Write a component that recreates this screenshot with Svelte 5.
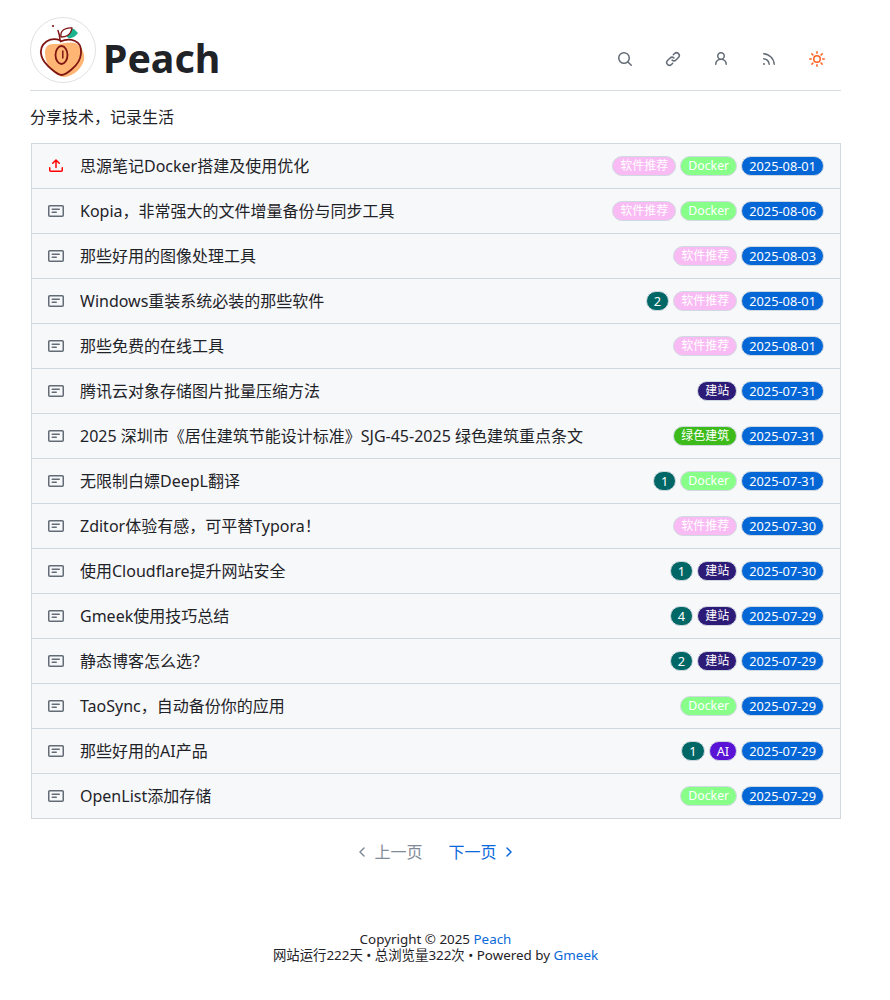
<script>
	const paths = {
		search: 'M10.68 11.74a6 6 0 0 1-7.922-8.982 6 6 0 0 1 8.982 7.922l3.04 3.04a.749.749 0 0 1-.326 1.275.749.749 0 0 1-.734-.215ZM11.5 7a4.499 4.499 0 1 0-8.997 0A4.499 4.499 0 0 0 11.5 7Z',
		link: 'm7.775 3.275 1.25-1.25a3.5 3.5 0 1 1 4.95 4.95l-2.5 2.5a3.5 3.5 0 0 1-4.95 0 .751.751 0 0 1 .018-1.042.751.751 0 0 1 1.042-.018 1.998 1.998 0 0 0 2.83 0l2.5-2.5a2.002 2.002 0 0 0-2.83-2.83l-1.25 1.25a.751.751 0 0 1-1.042-.018.751.751 0 0 1-.018-1.042Zm-4.69 9.64a1.998 1.998 0 0 0 2.83 0l1.25-1.25a.751.751 0 0 1 1.042.018.751.751 0 0 1 .018 1.042l-1.25 1.25a3.5 3.5 0 1 1-4.95-4.95l2.5-2.5a3.5 3.5 0 0 1 4.95 0 .751.751 0 0 1-.018 1.042.751.751 0 0 1-1.042.018 1.998 1.998 0 0 0-2.83 0l-2.5 2.5a1.998 1.998 0 0 0 0 2.83Z',
		person: 'M10.561 8.073a6.005 6.005 0 0 1 3.432 5.142.75.75 0 1 1-1.498.07 4.5 4.5 0 0 0-8.99 0 .75.75 0 0 1-1.498-.07 6.004 6.004 0 0 1 3.431-5.142 3.999 3.999 0 1 1 5.123 0ZM10.5 5a2.5 2.5 0 1 0-5 0 2.5 2.5 0 0 0 5 0Z',
		rss: 'M2.002 2.725a.75.75 0 0 1 .797-.699C8.79 2.42 13.58 7.21 13.974 13.201a.75.75 0 0 1-1.497.098 10.502 10.502 0 0 0-9.776-9.776.747.747 0 0 1-.7-.798ZM2.84 7.05h-.002a7.002 7.002 0 0 1 6.113 6.111.75.75 0 0 1-1.49.178 5.503 5.503 0 0 0-4.8-4.8.75.75 0 0 1 .179-1.489ZM2 13a1 1 0 1 1 2 0 1 1 0 0 1-2 0Z',
		sun: 'M8 12a4 4 0 1 1 0-8 4 4 0 0 1 0 8Zm0-1.5a2.5 2.5 0 1 0 0-5 2.5 2.5 0 0 0 0 5Zm5.657-8.157a.75.75 0 0 1 0 1.061l-1.061 1.06a.749.749 0 0 1-1.275-.326.749.749 0 0 1 .215-.734l1.06-1.06a.75.75 0 0 1 1.06 0Zm-9.193 9.193a.75.75 0 0 1 0 1.06l-1.06 1.061a.75.75 0 1 1-1.061-1.06l1.06-1.061a.75.75 0 0 1 1.061 0ZM8 0a.75.75 0 0 1 .75.75v1.5a.75.75 0 0 1-1.5 0V.75A.75.75 0 0 1 8 0ZM3 8a.75.75 0 0 1-.75.75H.75a.75.75 0 0 1 0-1.5h1.5A.75.75 0 0 1 3 8Zm13 0a.75.75 0 0 1-.75.75h-1.5a.75.75 0 0 1 0-1.5h1.5A.75.75 0 0 1 16 8Zm-8 5a.75.75 0 0 1 .75.75v1.5a.75.75 0 0 1-1.5 0v-1.5A.75.75 0 0 1 8 13Zm3.536-1.464a.75.75 0 0 1 1.06 0l1.061 1.06a.75.75 0 0 1-1.06 1.061l-1.061-1.06a.75.75 0 0 1 0-1.061ZM2.343 2.343a.75.75 0 0 1 1.061 0l1.06 1.061a.751.751 0 0 1-.018 1.042.751.751 0 0 1-1.042.018l-1.06-1.06a.75.75 0 0 1 0-1.06Z',
		upload: 'M2.75 14A1.75 1.75 0 0 1 1 12.25v-2.5a.75.75 0 0 1 1.5 0v2.5c0 .138.112.25.25.25h10.5a.25.25 0 0 0 .25-.25v-2.5a.75.75 0 0 1 1.5 0v2.5A1.75 1.75 0 0 1 13.25 14ZM11.78 4.72a.749.749 0 1 1-1.06 1.06L8.75 3.811V9.5a.75.75 0 0 1-1.5 0V3.811L5.28 5.78a.749.749 0 1 1-1.06-1.06l3.25-3.25a.749.749 0 0 1 1.06 0l3.25 3.25Z',
		note: 'M0 3.75C0 2.784.784 2 1.75 2h12.5c.966 0 1.75.784 1.75 1.75v8.5A1.75 1.75 0 0 1 14.25 14H1.75A1.75 1.75 0 0 1 0 12.25Zm1.75-.25a.25.25 0 0 0-.25.25v8.5c0 .138.112.25.25.25h12.5a.25.25 0 0 0 .25-.25v-8.5a.25.25 0 0 0-.25-.25ZM3.5 6.25a.75.75 0 0 1 .75-.75h7a.75.75 0 0 1 0 1.5h-7a.75.75 0 0 1-.75-.75Zm.75 2.25h4a.75.75 0 0 1 0 1.5h-4a.75.75 0 0 1 0-1.5Z'
	};

	const navIcons = ['search', 'link', 'person', 'rss', 'sun'];

	const SOFT = '软件推荐';
	const SITE = '建站';
	const DOCKER = 'Docker';
	const tagColors = {
		[SOFT]: 'tag-pink cjk',
		[SITE]: 'tag-navy cjk',
		[DOCKER]: 'tag-lime',
		绿色建筑: 'tag-green cjk',
		AI: 'tag-purple'
	};

	const posts = [
		{ title: '思源笔记Docker搭建及使用优化', tags: [SOFT, DOCKER], date: '2025-08-01', pinned: true },
		{ title: 'Kopia，非常强大的文件增量备份与同步工具', tags: [SOFT, DOCKER], date: '2025-08-06' },
		{ title: '那些好用的图像处理工具', tags: [SOFT], date: '2025-08-03' },
		{ title: 'Windows重装系统必装的那些软件', count: 2, tags: [SOFT], date: '2025-08-01' },
		{ title: '那些免费的在线工具', tags: [SOFT], date: '2025-08-01' },
		{ title: '腾讯云对象存储图片批量压缩方法', tags: [SITE], date: '2025-07-31' },
		{ title: '2025 深圳市《居住建筑节能设计标准》SJG-45-2025 绿色建筑重点条文', tags: ['绿色建筑'], date: '2025-07-31' },
		{ title: '无限制白嫖DeepL翻译', count: 1, tags: [DOCKER], date: '2025-07-31' },
		{ title: 'Zditor体验有感，可平替Typora！', tags: [SOFT], date: '2025-07-30' },
		{ title: '使用Cloudflare提升网站安全', count: 1, tags: [SITE], date: '2025-07-30' },
		{ title: 'Gmeek使用技巧总结', count: 4, tags: [SITE], date: '2025-07-29' },
		{ title: '静态博客怎么选？', count: 2, tags: [SITE], date: '2025-07-29' },
		{ title: 'TaoSync，自动备份你的应用', tags: [DOCKER], date: '2025-07-29' },
		{ title: '那些好用的AI产品', count: 1, tags: ['AI'], date: '2025-07-29' },
		{ title: 'OpenList添加存储', tags: [DOCKER], date: '2025-07-29' }
	];
</script>

<div class="page">
	<header class="header">
		<div class="brand">
			<svg class="avatar" viewBox="0 0 66 66" width="66" height="66">
				<circle cx="33" cy="33" r="32.5" fill="#fff" stroke="#e1e1e1" />
				<path d="M33 16c3-3 8-5 11-4l4 4c-2 3-5 5-9 5.500z" fill="#1cb38e" />
				<path d="M15 36c0-6 3-9 8-9 4 0 8 0 12-1 6-1 12-1 14 3 4 3 6 9 5 14-2 8-9 14-15 16-5 2-9 1-12-2-6-3-12-11-12-21z" fill="#ffb675" />
				<path d="M30.500 23.500c-5-2-10-1.500-14 1-5 3.500-6.500 9-5 14.500 1.500 5.500 6 10 11 14 3 2.500 6 5 9 5 3.500 0 6.500-2.500 10-5.500 5-4 9-10 9.500-16 .5-5.500-1-10.500-6-12.500-5-2-10-1.500-14.500 .5" fill="none" stroke="#7e1512" stroke-width="1.800" stroke-linecap="round" />
				<path d="M30 23c-.2-3.500-.8-6.500-2-9.500" fill="none" stroke="#7e1512" stroke-width="1.500" stroke-linecap="round" />
				<path d="M31 20c-.5-3 .5-6 3-7.500 2.500-1.500 5.500-2 8-1.500-.5 3-2 6-4.500 7.500-2 1.200-4.500 1.500-6.500 1.500z" fill="#fff" stroke="#7e1512" stroke-width="1.300" stroke-linejoin="round" />
				<circle cx="23" cy="9" r="1.100" fill="#7e1512" />
				<ellipse cx="31.500" cy="38" rx="6" ry="9" fill="none" stroke="#7e1512" stroke-width="1.800" />
				<path d="M32.800 34v7" fill="none" stroke="#7e1512" stroke-width="1.500" stroke-linecap="round" />
			</svg>
			<span class="site-name">Peach</span>
		</div>
		<nav class="nav">
			{#each navIcons as name}
				<span class="nav-btn" class:sun={name === 'sun'}>
					<svg viewBox="0 0 16 16" width="16" height="16"><path d={paths[name]} fill="currentColor" /></svg>
				</span>
			{/each}
		</nav>
	</header>

	<p class="tagline">分享技术，记录生活</p>

	<ul class="post-list">
		{#each posts as post}
			<li class="post">
				<svg class="post-icon" class:pinned={post.pinned} viewBox="0 0 16 16" width="16" height="16">
					<path d={post.pinned ? paths.upload : paths.note} fill="currentColor" />
				</svg>
				<a class="post-title" href="#top">{post.title}</a>
				<div class="labels">
					{#if post.count}
						<span class="label tag-count">{post.count}</span>
					{/if}
					{#each post.tags as tag}
						<span class="label {tagColors[tag]}">{tag}</span>
					{/each}
					<span class="label tag-date">{post.date}</span>
				</div>
			</li>
		{/each}
	</ul>

	<div class="pager">
		<span class="page-link disabled">
			<svg viewBox="0 0 16 16" width="16" height="16"><path d="M10 4 6 8l4 4" fill="none" stroke="currentColor" stroke-width="1.500" stroke-linecap="round" stroke-linejoin="round" /></svg>
			上一页
		</span>
		<a class="page-link" href="#top">
			下一页
			<svg viewBox="0 0 16 16" width="16" height="16"><path d="m6 4 4 4-4 4" fill="none" stroke="currentColor" stroke-width="1.500" stroke-linecap="round" stroke-linejoin="round" /></svg>
		</a>
	</div>

	<footer class="footer">
		<div>Copyright © 2025 <a href="#top">Peach</a></div>
		<div>网站运行222天 • 总浏览量322次 • Powered by <a href="#top">Gmeek</a></div>
	</footer>
</div>

<style>
	:global(body) {
		background: #fff;
		color: #1f2328;
		font-family: "Noto Sans", "Noto Sans CJK SC", sans-serif;
		text-spacing-trim: space-all;
	}
	.page {
		box-sizing: border-box;
		width: 871px;
		height: 1000px;
		padding: 17px 30px 0;
	}
	a {
		color: #0969da;
		text-decoration: none;
	}
	.header {
		display: flex;
		justify-content: space-between;
		align-items: flex-end;
		height: 74px;
		box-sizing: border-box;
		border-bottom: 1px solid #d8dee4;
	}
	.brand {
		display: flex;
		align-items: center;
		gap: 7px;
		height: 66px;
		align-self: flex-start;
	}
	.avatar {
		display: block;
		flex: none;
	}
	.site-name {
		font-size: 39.3px;
		font-weight: 700;
		line-height: 1;
		padding-top: 17px;
	}
	.nav {
		display: flex;
		gap: 16px;
		padding: 0 8px 23px 0;
	}
	.nav-btn {
		display: flex;
		width: 32px;
		justify-content: center;
		color: #636c76;
	}
	.nav-btn.sun {
		color: #ff5f1f;
	}
	.tagline {
		margin: 0;
		padding-top: 14px;
		height: 36px;
		font-size: 16px;
		line-height: 24px;
		box-sizing: border-box;
	}
	.post-list {
		list-style: none;
		margin: 16px 0 0 1px;
		padding: 0;
		border: 1px solid #d1d9e0;
		border-bottom: 0;
		background: #f6f8fa;
	}
	.post {
		display: flex;
		align-items: center;
		height: 45px;
		box-sizing: border-box;
		padding: 0 16px;
		border-bottom: 1px solid #d1d9e0;
	}
	.post-icon {
		flex: none;
		margin-right: 16px;
		color: #636c76;
	}
	.post-icon.pinned {
		color: #f00;
	}
	.post-title {
		flex: 1;
		min-width: 0;
		margin-top: -2px;
		color: #1f2328;
		font-size: 16px;
	}
	.labels {
		display: flex;
		gap: 4px;
		flex: none;
	}
	.label {
		box-sizing: border-box;
		height: 20px;
		padding: 0 7px;
		border: 1px solid #d1d9e0;
		border-radius: 2em;
		color: #fff;
		font-size: 12.8px;
		line-height: 18px;
	}
	.label.cjk {
		font-size: 12px;
	}
	.tag-lime {
		font-size: 12.3px;
	}
	.tag-pink { background: #f9bbf3; }
	.tag-lime { background: #88ff88; }
	.tag-navy { background: #2d1b78; }
	.tag-green { background: #3cbb1a; }
	.tag-purple { background: #5a14d6; }
	.tag-count { background: #006666; }
	.tag-date { background: #0566d6; }
	.pager {
		display: flex;
		justify-content: center;
		gap: 10px;
		margin-top: 16px;
	}
	.page-link {
		display: flex;
		align-items: center;
		gap: 4px;
		padding: 5px 8px;
		font-size: 16px;
		line-height: 24px;
	}
	.page-link.disabled {
		color: #818b98;
	}
	.footer {
		margin-top: 62px;
		text-align: center;
		font-size: 13.4px;
		line-height: 16px;
	}
</style>
